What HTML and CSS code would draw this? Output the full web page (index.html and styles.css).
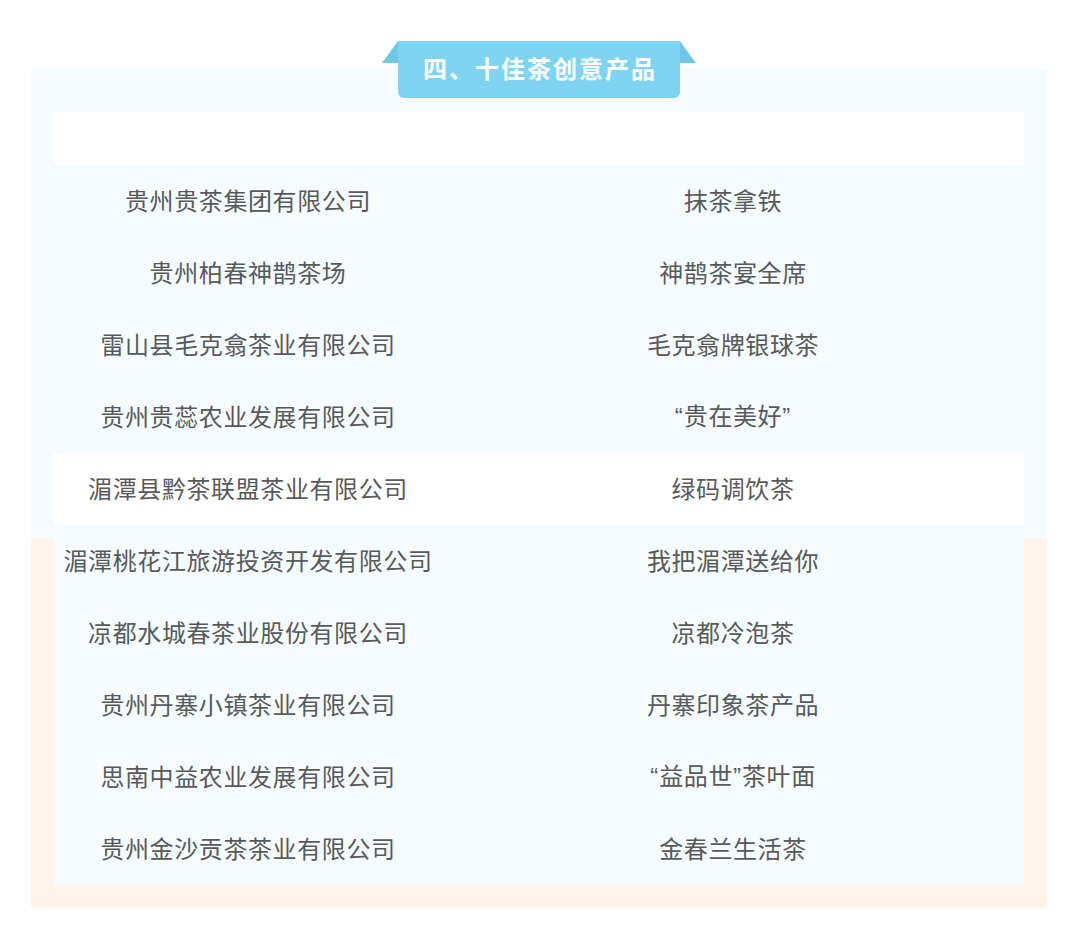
FILE: index.html
```html
<!DOCTYPE html>
<html lang="zh-CN">
<head>
<meta charset="utf-8">
<title>十佳茶创意产品</title>
<link rel="stylesheet" href="styles.css">
</head>
<body>
<div class="page">
  <section class="panel">
    <div class="tab">
      <span class="ear ear-left"></span>
      <span class="ear ear-right"></span>
      <h2 class="tab-title">四、十佳茶创意产品</h2>
    </div>
    <div class="table">
      <div class="row row-head"><div class="cell cell-a"></div><div class="cell cell-b"></div></div>
      <div class="row"><div class="cell cell-a">贵州贵茶集团有限公司</div><div class="cell cell-b">抹茶拿铁</div></div>
      <div class="row"><div class="cell cell-a">贵州柏春神鹊茶场</div><div class="cell cell-b">神鹊茶宴全席</div></div>
      <div class="row"><div class="cell cell-a">雷山县毛克翕茶业有限公司</div><div class="cell cell-b">毛克翕牌银球茶</div></div>
      <div class="row"><div class="cell cell-a">贵州贵蕊农业发展有限公司</div><div class="cell cell-b"><span class="q">“</span>贵在美好<span class="q">”</span></div></div>
      <div class="row row-white"><div class="cell cell-a">湄潭县黔茶联盟茶业有限公司</div><div class="cell cell-b">绿码调饮茶</div></div>
      <div class="row"><div class="cell cell-a">湄潭桃花江旅游投资开发有限公司</div><div class="cell cell-b">我把湄潭送给你</div></div>
      <div class="row"><div class="cell cell-a">凉都水城春茶业股份有限公司</div><div class="cell cell-b">凉都冷泡茶</div></div>
      <div class="row"><div class="cell cell-a">贵州丹寨小镇茶业有限公司</div><div class="cell cell-b">丹寨印象茶产品</div></div>
      <div class="row"><div class="cell cell-a">思南中益农业发展有限公司</div><div class="cell cell-b"><span class="q">“</span>益品世<span class="q">”</span>茶叶面</div></div>
      <div class="row"><div class="cell cell-a">贵州金沙贡茶茶业有限公司</div><div class="cell cell-b">金春兰生活茶</div></div>
    </div>
  </section>
</div>
</body>
</html>
```
FILE: styles.css
```css
html, body {
  margin: 0;
  padding: 0;
  background: #ffffff;
}
body {
  font-family: "Noto Sans CJK SC", "Noto Sans", sans-serif;
  color: #595959;
}
.page {
  padding-top: 68px;
  padding-left: 31px;
}
.panel {
  position: relative;
  width: 1016px;
  box-sizing: border-box;
  padding: 44px 23px 23px;
  background: linear-gradient(to bottom, #f4fcff 0, #f4fcff 470px, #fff3ea 470px, #fff3ea 100%);
}
.tab {
  position: absolute;
  top: -27px;
  left: 367px;
  width: 282px;
  height: 57px;
}
.tab-title {
  position: relative;
  z-index: 2;
  margin: 0;
  height: 57px;
  box-sizing: border-box;
  background: #7ed4f1;
  border-radius: 0 0 6px 6px;
  color: #ffffff;
  font-size: 24px;
  font-weight: 700;
  letter-spacing: 2px;
  line-height: 54px;
  text-align: center;
  padding-left: 2px;
}
.ear {
  position: absolute;
  top: 0;
  width: 0;
  height: 0;
  border-bottom: 22px solid #6ec7e7;
  z-index: 1;
}
.ear-left {
  left: -16px;
  border-left: 16px solid transparent;
}
.ear-right {
  right: -16px;
  border-right: 16px solid transparent;
}
.table {
  display: flex;
  flex-direction: column;
  background: #f4fcff;
}
.row {
  display: grid;
  grid-template-columns: 388px 1fr;
  height: 72px;
  align-items: center;
}
.row-head {
  height: 53px;
  background: #ffffff;
}
.row-white {
  background: #ffffff;
}
.cell {
  text-align: center;
  font-size: 24px;
  letter-spacing: 0.6px;
  white-space: nowrap;
  line-height: 1;
  padding-bottom: 2px;
}
.q {
  font-family: "Liberation Sans", "Noto Sans", sans-serif;
  letter-spacing: 1px;
}
```
